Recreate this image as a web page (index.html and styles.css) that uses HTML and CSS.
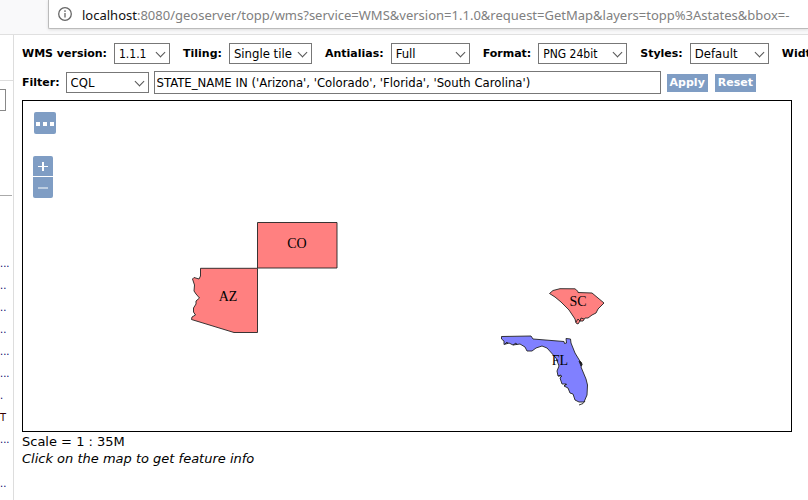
FILE: index.html
```html
<!DOCTYPE html>
<html lang="en">
<head>
<meta charset="utf-8">
<title>OpenLayers map preview</title>
<link rel="stylesheet" href="styles.css">
</head>
<body>
<header class="browser-bar">
  <div class="address">
    <svg class="info" viewBox="0 0 14 14" aria-hidden="true"><circle cx="7" cy="7" r="6.3"/><path d="M7 6v4.5M7 3.3v1.6"/></svg>
    <span class="url"><span class="host">localhost</span>:8080/geoserver/topp/wms?service=WMS&amp;version=1.1.0&amp;request=GetMap&amp;layers=topp%3Astates&amp;bbox=-</span>
  </div>
</header>
<div class="workspace">
  <aside class="sidebar">
    <div class="side-head"></div>
    <div class="side-search"><div class="side-box"></div></div>
    <ul class="side-list">
      <li>...</li><li>..</li><li>..</li><li>..</li><li>...</li><li>...</li><li>.</li><li class="plain">T</li><li>...</li><li></li><li>..</li>
    </ul>
  </aside>
  <main class="content">
    <form class="tools">
      <div class="row options">
        <span class="field"><label for="version">WMS version:</label><span class="pick version"><select id="version"><option>1.1.1</option></select></span></span>
        <span class="field"><label for="tiling">Tiling:</label><span class="pick tiling"><select id="tiling"><option>Single tile</option></select></span></span>
        <span class="field"><label for="antialias">Antialias:</label><span class="pick"><select id="antialias"><option>Full</option></select></span></span>
        <span class="field"><label for="format">Format:</label><span class="pick format"><select id="format"><option>PNG 24bit</option></select></span></span>
        <span class="field"><label for="styles">Styles:</label><span class="pick"><select id="styles"><option>Default</option></select></span></span>
        <span class="field"><label for="width">Width/Height:</label><span class="pick"><select id="width"><option>Auto</option></select></span></span>
      </div>
      <div class="row filter">
        <label for="filterType">Filter:</label>
        <span class="pick kind"><select id="filterType"><option>CQL</option></select></span>
        <input class="query" type="text" aria-label="Filter expression" value="STATE_NAME IN ('Arizona', 'Colorado', 'Florida', 'South Carolina')">
        <button class="action" type="button">Apply</button>
        <button class="action" type="button">Reset</button>
      </div>
    </form>
    <div class="map">
      <svg class="states" viewBox="0 0 768 330" role="img" aria-label="Map of selected states">
        <g transform="translate(-23 -101)">
          <path class="red" d="M257.500 222.500H337V268H257.500Z"/>
          <path class="red" d="M200.500 268.300H257.500V332.500H234L191.500 319.500L192 317L195.500 315L193.500 312L193.500 308L196 304L196 301L199.500 298L196 294L194 291L194.500 285L192.500 279L194 277.500L199 279L200.500 276Z"/>
          <path class="red" d="M549.500 293.500L553 290.500L560 288.700L575 288.800L578 291.500V292.500L592 293L604 303L598 309L596 313L592 315L588 318L585 318L583 321L580 321L578 324L576 323L575 319L569 310L561 302L555 297Z"/>
          <path class="key" d="M576 322l2-3 2 2 1-3 3 1"/>
          <path class="blue" d="M501.500 336.500L531 336L533 339L564 341.500L564.500 343.500L566.500 343L566 338.500L570.500 339L571 343L575 353L582 364.500L581 367L586 379L587.500 385L587 395L584 402L579 402L575 400L573 394L570 393L568 388L564 386L566 384L562 384L560 378L562 376L558 376L557 371L559 366L556 358L547 348L542 346L536 348L532 351L527 351L525 347L520 344L513 345L509 343L504 344.500V341L501.500 339Z"/>
          <path class="ink" d="M579 361l2 1 1 2-1 2z"/>
          <path class="key" d="M505 344l2-2 1 2M513 345l3-2 1 2M558 376l3-1M564 386l3-2M585 401q-1 3-6 4"/>
          <text x="297" y="247.500">CO</text>
          <text x="228" y="301">AZ</text>
          <text x="578" y="305.500">SC</text>
          <text x="560" y="365">FL</text>
        </g>
      </svg>
      <div class="controls">
        <button class="more" type="button" aria-label="Toggle options"><svg viewBox="0 0 22 22"><path d="M2 10h4v4h-4zM9 10h4v4h-4zM16 10h4v4h-4z"/></svg></button>
        <div class="zoom">
          <button type="button" aria-label="Zoom in"><svg viewBox="0 0 20 20"><path d="M5 10h10v1H5zM9 6h2v9H9z"/></svg></button>
          <button type="button" aria-label="Zoom out"><svg viewBox="0 0 20 20"><path d="M5 10h10v1H5z"/></svg></button>
        </div>
      </div>
    </div>
    <p class="scale">Scale = 1 : 35M</p>
    <p class="hint">Click on the map to get feature info</p>
  </main>
</div>
</body>
</html>
```
FILE: styles.css
```css
* { box-sizing: border-box; }
html, body { height: 100%; }
body {
  margin: 0;
  display: flex;
  flex-direction: column;
  overflow: hidden;
  background: #fff;
  color: #000;
  font-family: "DejaVu Sans", Verdana, sans-serif;
}
.browser-bar {
  flex: none;
  height: 35px;
  padding-left: 48px;
  background: #f9f9fa;
  border-bottom: 1px solid #e0e0e0;
}
.address {
  display: flex;
  align-items: center;
  gap: 10px;
  height: 29px;
  padding-left: 9px;
  overflow: hidden;
  background: #fff;
  border: solid #bbb;
  border-width: 0 0 1px 1px;
  border-radius: 0 0 0 2px;
  box-shadow: 0 1px 3px #ddd;
}
.info { flex: none; width: 14px; height: 14px; fill: none; stroke: #666; stroke-width: 1.3; }
.url { padding-top: 2px; font: 13px/20px "Noto Sans", sans-serif; color: #808080; white-space: nowrap; }
.host { color: #111; }
.workspace { display: flex; flex: 1; min-height: 0; }
.sidebar {
  flex: none;
  width: 14px;
  border-right: 1px solid #ddd;
  overflow: hidden;
}
.side-head { height: 46px; border-bottom: 1px solid #ddd; }
.side-search { height: 115px; width: 12px; padding-top: 8px; border-bottom: 1px solid #aaa; }
.side-box { width: 6px; height: 22px; border: solid #888; border-width: 1px 1px 1px 0; }
.side-list {
  margin: 57px 0 0;
  padding: 0;
  list-style: none;
  font: 11px/22px "DejaVu Sans Condensed", "DejaVu Sans", sans-serif;
  color: #006;
}
.side-list li { height: 22px; }
.plain { color: #300; }
.content { flex: 1; min-width: 0; padding: 8px 16px 0 8px; }
.row { display: flex; align-items: center; white-space: nowrap; }
.options { height: 21px; gap: 13px; margin-right: -16px; overflow: hidden; }
.field { display: flex; flex: none; align-items: center; gap: 7px; }
label { font-size: 11px; font-weight: bold; }
.pick { position: relative; display: block; flex: none; width: 79px; height: 21px; }
.pick::after {
  content: "";
  position: absolute;
  top: 6px;
  right: 6px;
  width: 6px;
  height: 6px;
  border: solid #555;
  border-width: 0 1px 1px 0;
  transform: rotate(45deg);
  pointer-events: none;
}
.version { width: 56px; }
.tiling { width: 83px; }
.format { width: 89px; }
.kind { width: 83px; }
select {
  appearance: none;
  display: block;
  width: 100%;
  height: 21px;
  margin: 0;
  padding: 0 0 0 4px;
  border: 1px solid #777;
  border-radius: 0;
  background: #fff;
  color: #000;
  font: 13px "DejaVu Sans Condensed", Tahoma, sans-serif;
}
.version select, .format select { font-size: 12px; }
.filter { height: 23px; margin-top: 7px; gap: 5px; }
.filter label { margin-right: 1px; }
.query {
  flex: 0 1 507px;
  min-width: 0;
  height: 23px;
  margin: 0;
  padding: 0 2px;
  border: 1px solid #777;
  color: #000;
  font: 13px "DejaVu Sans Condensed", Tahoma, sans-serif;
}
.action {
  height: 18px;
  margin: 0 1px;
  padding: 0 3px;
  border: 0;
  background: #7f9dc4;
  color: #fff;
  font: bold 11px "DejaVu Sans", Verdana, sans-serif;
}
.map { position: relative; margin-top: 6px; border: 1px solid #000; }
.states { display: block; width: 100%; height: auto; }
.states path { stroke: #222; stroke-width: 0.9; stroke-linejoin: round; }
.states text { font: 14px "Liberation Serif", serif; text-anchor: middle; }
.red { fill: #ff8080; }
.blue { fill: #8080ff; }
.ink { fill: #111; }
.key { fill: none; }
.controls { position: absolute; top: 11px; left: 10px; }
.controls button {
  display: block;
  width: 20px;
  height: 20px;
  padding: 0;
  border: 0;
  background: #7f9dc4;
  border-radius: 2px 2px 0 0;
}
.controls svg { display: block; width: 100%; height: 100%; fill: #fff; }
.controls .more { width: 22px; height: 22px; margin-left: 1px; border-radius: 2px; }
.zoom { display: grid; gap: 1px; margin-top: 22px; }
.zoom button:last-child { height: 21px; border-radius: 0 0 2px 2px; }
p { margin: 0; font-size: 13px; line-height: 17px; }
.scale { margin-top: 1px; }
.hint { font-style: italic; }
```
